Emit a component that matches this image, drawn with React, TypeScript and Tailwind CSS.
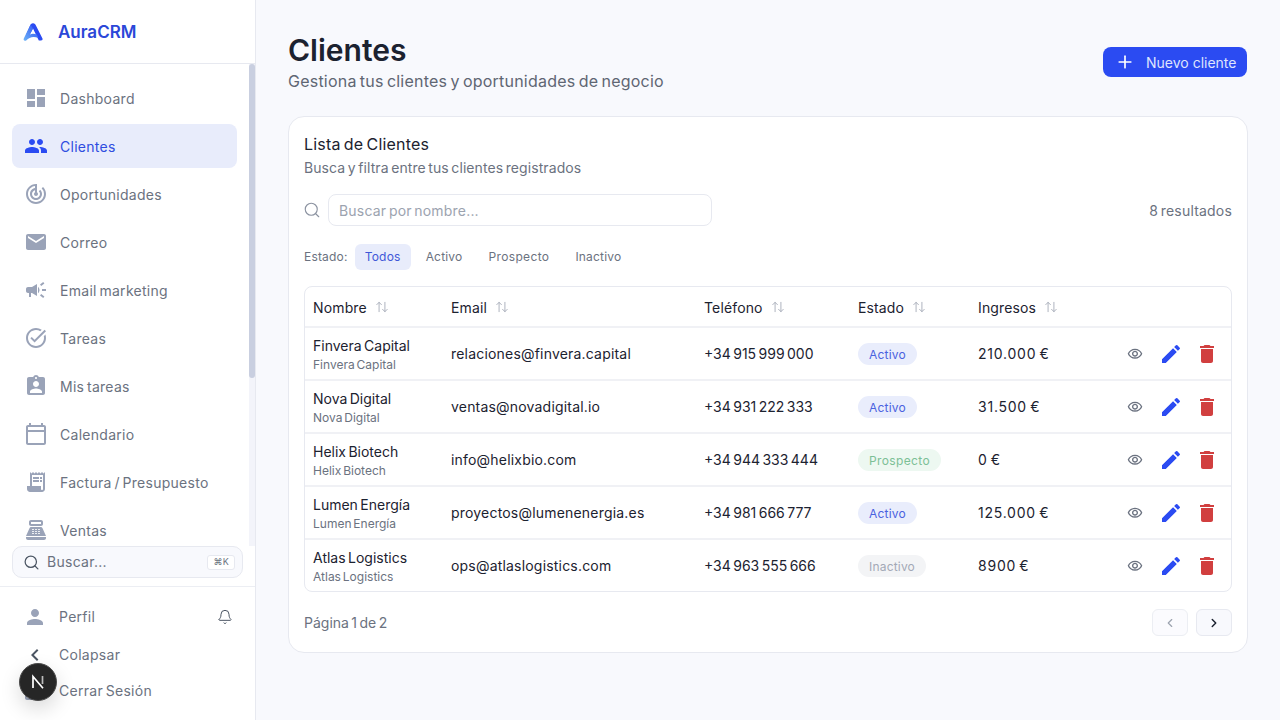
import { Search, Bell, ArrowUpDown, ChevronLeft, ChevronRight, Plus } from "lucide-react";
import {
  MdDashboard, MdPeople, MdTrackChanges, MdEmail, MdCampaign, MdOutlineTaskAlt, MdAssignmentInd,
  MdOutlineCalendarToday, MdReceiptLong, MdPointOfSale, MdPerson, MdChevronLeft, MdLogout, MdEdit, MdDelete,
  MdOutlineVisibility,
} from "react-icons/md";

const navItems = [
  { label: "Dashboard", icon: MdDashboard },
  { label: "Clientes", icon: MdPeople, active: true },
  { label: "Oportunidades", icon: MdTrackChanges },
  { label: "Correo", icon: MdEmail },
  { label: "Email marketing", icon: MdCampaign },
  { label: "Tareas", icon: MdOutlineTaskAlt },
  { label: "Mis tareas", icon: MdAssignmentInd },
  { label: "Calendario", icon: MdOutlineCalendarToday },
  { label: "Factura / Presupuesto", icon: MdReceiptLong },
  { label: "Ventas", icon: MdPointOfSale },
];

const clients = [
  { name: "Finvera Capital", email: "relaciones@finvera.capital", phone: "+34 915 999 000", status: "Activo", revenue: "210.000 €" },
  { name: "Nova Digital", email: "ventas@novadigital.io", phone: "+34 931 222 333", status: "Activo", revenue: "31.500 €" },
  { name: "Helix Biotech", email: "info@helixbio.com", phone: "+34 944 333 444", status: "Prospecto", revenue: "0 €" },
  { name: "Lumen Energía", email: "proyectos@lumenenergia.es", phone: "+34 981 666 777", status: "Activo", revenue: "125.000 €" },
  { name: "Atlas Logistics", email: "ops@atlaslogistics.com", phone: "+34 963 555 666", status: "Inactivo", revenue: "8900 €" },
];

const badgeStyles: Record<string, string> = {
  Activo: "bg-[#e9edfc] text-[#4a62e0]",
  Prospecto: "bg-[#edf8f1] text-[#7cc096] tracking-[0.03em]",
  Inactivo: "bg-[#f3f4f6] text-[#a3a9b6]",
};

function Logo() {
  return (
    <svg width="20" height="20" viewBox="0 0 20 20">
      <defs>
        <linearGradient id="logo-a" x1="0" y1="1" x2="1" y2="0">
          <stop offset="0" stopColor="#6db4f7" />
          <stop offset="1" stopColor="#2b4bf2" />
        </linearGradient>
      </defs>
      <path d="M7.6 2.4Q10 .2 12.4 2.4L19.6 16.8Q20 18.6 18 18.6H15.8L10 6.6 6 14 3 13z" fill="#2b4bf2" />
      <path d="M7.6 2.4L10 6.6 6.8 12.4C9.5 11.4 12 11.8 13.8 12.6L15.4 16C10.5 13.8 6.5 15 3.2 18.4 1.2 19.2.2 18 .8 16.4z" fill="url(#logo-a)" />
    </svg>
  );
}

function Header({ label }: { label: string }) {
  return (
    <span className="flex items-center gap-2 pt-[1px] tracking-[0.01em]">
      {label}
      <ArrowUpDown className="w-3.5 h-3.5 text-[#a3a9b6]" strokeWidth={1.5} />
    </span>
  );
}

export default function App() {
  return (
    <div className="flex h-[720px] overflow-hidden bg-[#f8f9fd] text-[#1c2230] font-['Inter',sans-serif] tracking-[0.012em] [word-spacing:-1.5px]">
      <aside className="relative w-[256px] shrink-0 flex flex-col bg-white border-r border-[#e7e9f0]">
        <div className="h-[64px] shrink-0 flex items-center gap-[15px] pl-[23px] border-b border-[#e7e9f0]">
          <Logo />
          <span className="pt-[2px] text-[17px] font-semibold tracking-normal text-[#2b47d8]">AuraCRM</span>
        </div>
        <div className="relative h-[482px] shrink-0">
          <nav className="w-[249px] h-full overflow-hidden flex flex-col gap-1 pt-3 px-3">
            {navItems.map((item) => (
              <a
                key={item.label}
                className={`h-[44px] shrink-0 flex items-center gap-3 px-3 rounded-lg text-[14px] tracking-[0.02em] ${
                  item.active ? "bg-[#e8ecfb] text-[#2f4de0]" : "text-[#6b7280]"
                }`}
              >
                <item.icon className={`w-6 h-6 shrink-0 ${item.active ? "text-[#2b4bf2]" : "text-[#9aa3b8]"}`} />
                <span>{item.label}</span>
              </a>
            ))}
          </nav>
          <div className="absolute right-0 top-0 bottom-0 w-[6px] bg-[#f3f4fa]">
            <div className="h-[314px] rounded-full bg-[#c9cfe0]" />
          </div>
        </div>
        <div className="px-3 pb-2 border-b border-[#eceef3]">
          <div className="h-[32px] flex items-center gap-[7px] pl-[10px] pr-[7px] rounded-[10px] bg-[#f8f9fd] border border-[#e7e9f0] text-[14px] tracking-[0.02em] text-[#6b7280]">
            <Search className="w-[17px] h-[17px] text-[#4b5563]" strokeWidth={1.75} />
            <span className="flex-1 pb-[2px]">Buscar...</span>
            <span className="h-[15px] px-[5px] flex items-center rounded-[3px] bg-white border border-[#e7e9f0] text-[9px] text-[#6b7280]">⌘K</span>
          </div>
        </div>
        <div className="flex-1 flex flex-col pl-[23px] pr-[22px] pt-[12px] text-[14px] tracking-[0.02em] text-[#6b7280]">
          <div className="h-[36px] flex items-center gap-[12px]">
            <MdPerson className="w-6 h-6 text-[#9aa3b8]" />
            <span className="flex-1 pb-[2px]">Perfil</span>
            <Bell className="w-4 h-4 text-[#4b5563]" strokeWidth={1.5} />
          </div>
          <div className="h-[38px] mt-[1px] flex items-center gap-[12px]">
            <MdChevronLeft className="w-6 h-6 text-[#4b5563]" />
            <span className="pb-[2px]">Colapsar</span>
          </div>
          <div className="h-[34px] flex items-center gap-[12px]">
            <MdLogout className="w-6 h-6 text-[#9aa3b8]" />
            <span className="pb-[2px]">Cerrar Sesión</span>
          </div>
        </div>
        <div className="absolute left-[19px] top-[663px] w-[38px] h-[38px] rounded-full bg-[#262626] border border-[#4a4a4a] shadow-[0_8px_20px_rgba(0,0,0,0.15)] flex items-center justify-center">
          <svg width="16" height="16" viewBox="0 0 16 16">
            <path d="M3 14V2.5L13 14.2" fill="none" stroke="#fff" strokeWidth="1.7" />
            <path d="M12.5 2v8" stroke="#bbb" strokeWidth="1.7" />
          </svg>
        </div>
      </aside>

      <main className="flex-1 flex flex-col pt-[32px] pl-[32px] pr-[32px]">
        <div className="flex items-start justify-between">
          <div>
            <h1 className="text-[30px] leading-[36px] font-semibold tracking-normal text-[#1c2230]">Clientes</h1>
            <p className="mt-[1px] text-[16px] leading-[24px] tracking-[0.014em] text-[#5f6673]">Gestiona tus clientes y oportunidades de negocio</p>
          </div>
          <button className="mt-[15px] mr-[1px] w-[144px] h-[30px] flex items-center gap-[11px] pl-[12px] rounded-lg bg-[#2b4bf2] text-[14px] tracking-normal text-[#dfe4fd]">
            <Plus className="w-5 h-5 text-white" strokeWidth={2} />
            Nuevo cliente
          </button>
        </div>

        <section className="mt-[23px] h-[537px] bg-white rounded-2xl border border-[#e7e9f0] px-[15px] pt-[15px]">
          <h2 className="text-[16px] leading-[24px]">Lista de Clientes</h2>
          <p className="text-[14px] leading-[24px] tracking-[0.006em] text-[#6b7280]">Busca y filtra entre tus clientes registrados</p>

          <div className="mt-[14px] h-[32px] flex items-center">
            <Search className="w-[18px] h-[18px] -ml-[1px] text-[#8b92a0]" strokeWidth={1.5} />
            <div className="ml-[7px] w-[384px] h-[32px] flex items-center px-[10px] rounded-lg border border-[#e7e9f0] text-[14px] text-[#9ca3af]">
              Buscar por nombre...
            </div>
            <span className="ml-auto text-[14px] text-[#6b7280]">8 resultados</span>
          </div>

          <div className="mt-[18px] flex items-center text-[12px] text-[#6b7280]">
            <span className="mr-[7px]">Estado:</span>
            <span className="h-[26px] w-[56px] justify-center flex items-center rounded-md bg-[#e8ecfb] text-[#3f57d8]">Todos</span>
            <span className="h-[26px] ml-[5px] px-[10px] flex items-center">Activo</span>
            <span className="h-[26px] ml-[6px] px-[10px] flex items-center tracking-[0.03em]">Prospecto</span>
            <span className="h-[26px] ml-[6px] px-[10px] flex items-center">Inactivo</span>
          </div>

          <div className="mt-[16px] rounded-lg border border-[#e7e9f0] overflow-hidden">
            <table className="w-full table-fixed text-left text-[14px]">
              <colgroup>
                <col className="w-[138px]" />
                <col className="w-[253px]" />
                <col className="w-[154px]" />
                <col className="w-[120px]" />
                <col />
              </colgroup>
              <thead>
                <tr className="h-[40px] border-b-2 border-[#f0f1f5]">
                  <th className="pl-[8px] font-normal"><Header label="Nombre" /></th>
                  <th className="pl-[8px] font-normal"><Header label="Email" /></th>
                  <th className="pl-[8px] font-normal"><Header label="Teléfono" /></th>
                  <th className="pl-[8px] font-normal"><Header label="Estado" /></th>
                  <th className="pl-[8px] font-normal"><Header label="Ingresos" /></th>
                </tr>
              </thead>
              <tbody>
                {clients.map((c) => (
                  <tr key={c.name} className="h-[53px] last:h-[52px] border-b-2 border-[#f0f1f5] last:border-b-0">
                    <td className="pl-[8px] pt-[3px]">
                      <div className="leading-[18px] tracking-normal">{c.name}</div>
                      <div className="mt-[1px] text-[12px] leading-[18px] tracking-normal text-[#6b7280]">{c.name}</div>
                    </td>
                    <td className="pl-[8px]">{c.email}</td>
                    <td className="pl-[8px] tracking-normal">{c.phone}</td>
                    <td className="pl-[8px]">
                      <span className={`inline-flex h-[22px] items-center pt-[2px] px-[11px] rounded-full text-[12px] ${badgeStyles[c.status]}`}>
                        {c.status}
                      </span>
                    </td>
                    <td className="pl-[8px]">
                      <div className="flex items-center justify-between pr-[12px]">
                        <span className="tracking-[0.055em]">{c.revenue}</span>
                        <span className="flex items-center gap-[12px]">
                          <MdOutlineVisibility className="w-4 h-4 mr-[4px] text-[#6b7280]" />
                          <MdEdit className="w-6 h-6 text-[#2b4bf2]" />
                          <MdDelete className="w-6 h-6 text-[#d13f3f]" />
                        </span>
                      </div>
                    </td>
                  </tr>
                ))}
              </tbody>
            </table>
          </div>

          <div className="mt-[17px] flex items-center justify-between">
            <span className="text-[14px] tracking-normal text-[#6b7280]">Página 1 de 2</span>
            <div className="flex gap-2">
              <button className="w-9 h-[27px] flex items-center justify-center rounded-md bg-[#fbfbfe] border border-[#eceef3]">
                <ChevronLeft className="w-3.5 h-3.5 text-[#9ca3af]" />
              </button>
              <button className="w-9 h-[27px] flex items-center justify-center rounded-md bg-[#f8f9fd] border border-[#e7e9f0]">
                <ChevronRight className="w-3.5 h-3.5 text-[#1c2230]" strokeWidth={2.5} />
              </button>
            </div>
          </div>
        </section>
      </main>
    </div>
  );
}
